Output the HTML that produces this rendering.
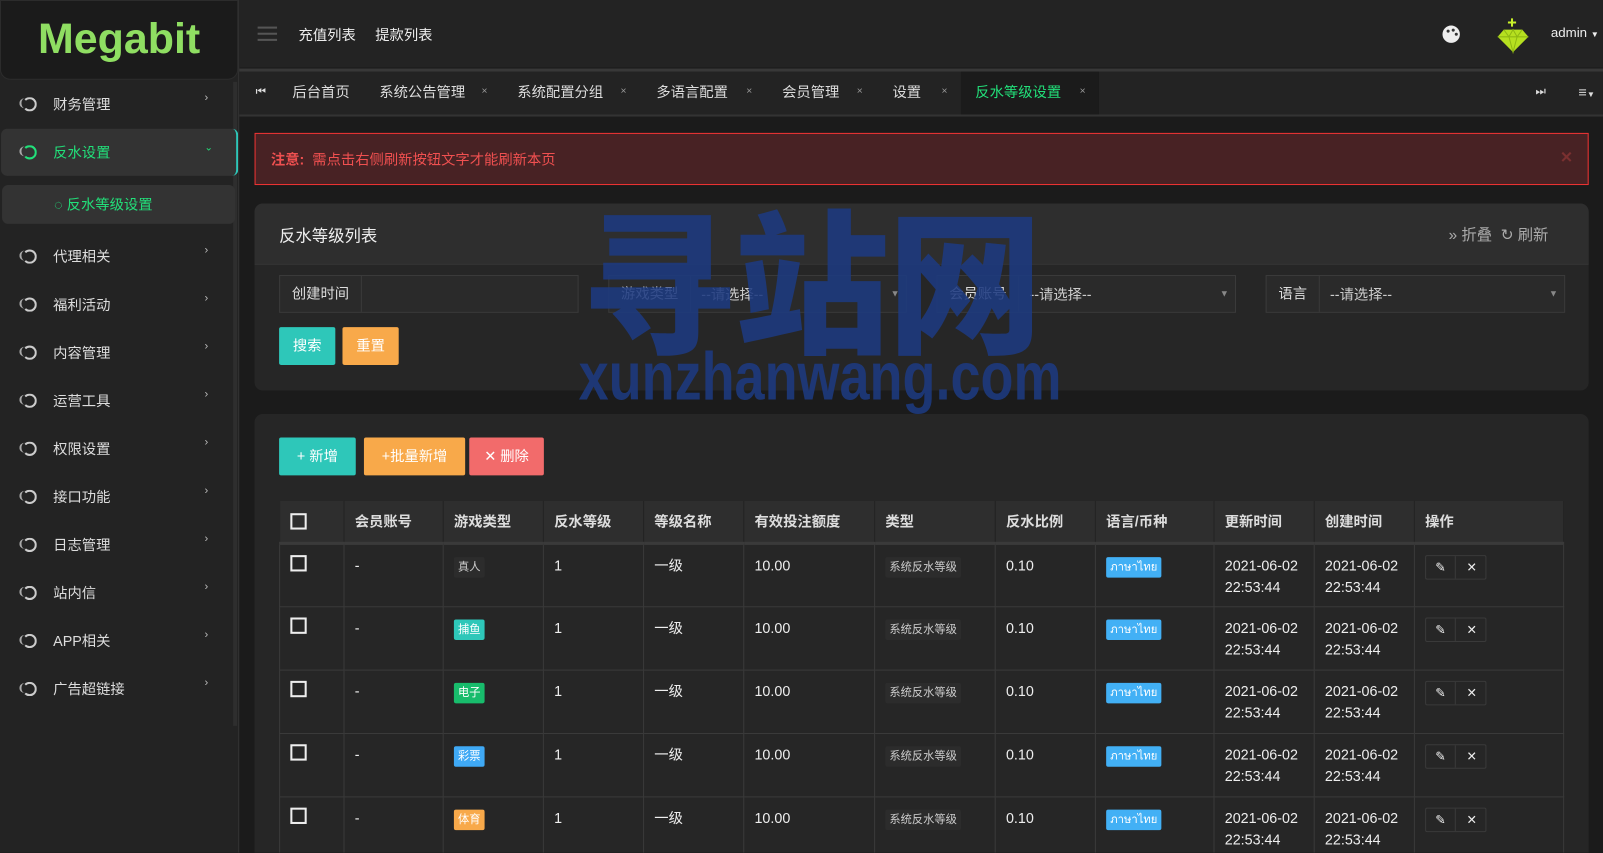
<!DOCTYPE html>
<html><head><meta charset="utf-8"><style>
*{box-sizing:border-box;margin:0;padding:0}
html,body{width:1603px;height:852px;overflow:hidden;background:#1b1b1b}
body{font-family:"Liberation Sans","Noto Sans CJK SC",sans-serif;color:#ddd;font-size:14px}
#w{position:absolute;left:0;top:0;width:1568px;height:834px;transform:scale(1.02232);transform-origin:0 0;background:#1b1b1b;overflow:hidden}
.a{position:absolute}
.side{left:0;top:0;width:234px;height:900px;background:#232323;border-right:1px solid #333}
.logo{left:0;top:0;width:233px;height:78px;background:#1b1b1b;border-radius:0 0 10px 10px;border:1px solid #2c2c2c;text-align:center;color:#8fde62;font-weight:bold;font-size:42px;line-height:74px;letter-spacing:0}
.mi{left:0;width:232px;height:46px;font-size:14px;color:#ddd}
.mi .ic{position:absolute;left:22px;top:50%;margin-top:-7px;width:14px;height:14px;border:2.5px solid #ccc;border-radius:50%;border-left-color:transparent}
.mi .ic:before{content:"";position:absolute;left:-5px;top:-1px;width:9px;height:10px;border-left:2px solid #aaa;border-radius:50%}
.mi .t{position:absolute;left:52px;top:50%;margin-top:-10px;line-height:20px}
.mi .ar{position:absolute;left:200px;top:50%;margin-top:-12px;font-size:11px;color:#bbb}
.hdr{left:234px;top:0;width:1334px;height:66px;background:#232323}
.tabs{left:234px;top:67px;width:1334px;height:47px;background:#232323;border-top:3px solid #383838;border-bottom:2px solid #333}
.tab{position:absolute;top:0;height:42px;line-height:40px;font-size:14px;color:#ddd}
.x{font-size:10px;color:#999;position:absolute;top:0}
.panel{background:#262626;border-radius:8px}
.fb{position:absolute;top:269px;height:37px;border:1px solid #3a3a3a;background:#2a2a2a}
.fb .l{position:absolute;left:0;top:0;width:80px;height:35px;border-right:1px solid #3a3a3a;line-height:35px;text-align:center;font-size:14px;color:#ddd}
.fb .v{position:absolute;left:90px;top:0;line-height:37px;font-size:14px;color:#ccc}
.fb .c{position:absolute;right:6px;top:0;line-height:35px;font-size:9px;color:#888}
.btn{position:absolute;height:37px;line-height:37px;text-align:center;color:#fff;font-size:14px;border-radius:2px}
table{position:absolute;left:273px;top:490px;width:1257px;border-collapse:collapse;font-size:14px}
th{background:#2e2e2e;height:41px;text-align:left;padding-left:10px;font-weight:bold;color:#ddd;border-right:1px solid #232323;border-bottom:3px solid #3a3a3a}
td{height:62px;vertical-align:top;padding:10px 0 0 10px;border:1px solid #3a3a3a;line-height:21px;color:#eee}
.cb{display:inline-block;width:16px;height:16px;border:2px solid #eee}
.tg{display:inline-block;font-size:11px;padding:0 4px;line-height:20px;border-radius:2px;color:#fff}
.tt{background:#2c2c2c;color:#ccc}
.op{display:inline-block;width:60px;height:24px;border:1px solid #3a3a3a;border-radius:2px;position:relative}
.op span{position:absolute;top:0;width:29px;line-height:22px;text-align:center;font-size:12px}
.wm{color:#1d3a80;opacity:.88}
</style></head><body><div id="w">
<div class="a side"></div>
<div class="a logo">Megabit</div>
<div class="a" style="left:228px;top:80px;width:4px;height:630px;background:#2e2e2e"></div>
<div class="a mi" style="top:79px"><i class="ic"></i><span class="t">财务管理</span><span class="ar">›</span></div>
<div class="a" style="left:1px;top:126px;width:232px;height:46px;background:#333;border-radius:6px;border-right:2px solid #2ec7b9"></div>
<div class="a mi" style="top:126px;color:#22e07a"><i class="ic" style="border-color:#22e07a;border-left-color:transparent"></i><span class="t">反水设置</span><span class="ar" style="color:#22e07a;font-size:10px;margin-top:-10px">⌄</span></div>
<div class="a" style="left:2px;top:181px;width:228px;height:38px;background:#333;border-radius:6px"></div>
<div class="a" style="left:53px;top:190px;font-size:14px;color:#22e07a;line-height:20px">◌ 反水等级设置</div>
<div class="a mi" style="top:228px"><i class="ic"></i><span class="t">代理相关</span><span class="ar">›</span></div>
<div class="a mi" style="top:275px"><i class="ic"></i><span class="t">福利活动</span><span class="ar">›</span></div>
<div class="a mi" style="top:322px"><i class="ic"></i><span class="t">内容管理</span><span class="ar">›</span></div>
<div class="a mi" style="top:369px"><i class="ic"></i><span class="t">运营工具</span><span class="ar">›</span></div>
<div class="a mi" style="top:416px"><i class="ic"></i><span class="t">权限设置</span><span class="ar">›</span></div>
<div class="a mi" style="top:463px"><i class="ic"></i><span class="t">接口功能</span><span class="ar">›</span></div>
<div class="a mi" style="top:510px"><i class="ic"></i><span class="t">日志管理</span><span class="ar">›</span></div>
<div class="a mi" style="top:557px"><i class="ic"></i><span class="t">站内信</span><span class="ar">›</span></div>
<div class="a mi" style="top:604px"><i class="ic"></i><span class="t">APP相关</span><span class="ar">›</span></div>
<div class="a mi" style="top:651px"><i class="ic"></i><span class="t">广告超链接</span><span class="ar">›</span></div>

<div class="a hdr"></div>
<div class="a" style="left:252px;top:26px;width:19px;height:2px;background:#555;box-shadow:0 6px 0 #555,0 12px 0 #555"></div>
<div class="a" style="left:292px;top:24px;font-size:14px;color:#eee">充值列表</div>
<div class="a" style="left:367px;top:24px;font-size:14px;color:#eee">提款列表</div>
<div class="a" style="left:1411px;top:25px;width:17px;height:17px;border-radius:50%;background:#eee"></div>
<div class="a" style="left:1415px;top:29px;width:3px;height:3px;border-radius:50%;background:#333;box-shadow:5px -1px 0 #333,8px 3px 0 #333"></div>
<svg class="a" style="left:1460px;top:14px" width="40" height="40" viewBox="0 0 40 40"><path d="M19 4v8M15 8h8" stroke="#c8f02a" stroke-width="2"/><path d="M5 22l6-7h18l6 7-15 15z" fill="#b6e020"/><path d="M5 22h30M11 15l5 7 4-7 4 7 5-7M16 22l4 15 4-15" stroke="#8fb812" stroke-width="1" fill="none"/></svg>
<div class="a" style="left:1517px;top:24px;font-size:13px;color:#eee">admin <span style="font-size:8px">▼</span></div>

<div class="a tabs">
<div class="tab" style="left:16px;font-size:11px">⏮</div>
<div class="tab" style="left:52px">后台首页</div>
<div class="tab" style="left:137px">系统公告管理</div><div class="x" style="left:237px;line-height:40px">×</div>
<div class="tab" style="left:272px">系统配置分组</div><div class="x" style="left:373px;line-height:40px">×</div>
<div class="tab" style="left:408px">多语言配置</div><div class="x" style="left:496px;line-height:40px">×</div>
<div class="tab" style="left:531px">会员管理</div><div class="x" style="left:604px;line-height:40px">×</div>
<div class="tab" style="left:639px">设置</div><div class="x" style="left:687px;line-height:40px">×</div>
<div class="tab" style="left:706px;width:135px;background:#1b1b1b"></div>
<div class="tab" style="left:720px;color:#22e07a">反水等级设置</div><div class="x" style="left:822px;line-height:40px">×</div>
<div class="tab" style="left:1268px;font-size:11px">⏭</div>
<div class="tab" style="left:1310px">≡<span style="font-size:8px">▼</span></div>
</div>

<div class="a" style="left:249px;top:130px;width:1305px;height:51px;background:#482224;border:1px solid #e33"></div>
<div class="a" style="left:265px;top:146px;font-size:14px;color:#f05050"><b>注意:</b>&nbsp; 需点击右侧刷新按钮文字才能刷新本页</div>
<div class="a" style="left:1526px;top:145px;font-size:15px;color:#7a3030;font-weight:bold">✕</div>

<div class="a panel" style="left:249px;top:199px;width:1305px;height:183px"></div>
<div class="a" style="left:249px;top:199px;width:1305px;height:60px;background:#2e2e2e;border-radius:8px 8px 0 0;border-bottom:1px solid #3a3a3a"></div>
<div class="a" style="left:273px;top:217px;font-size:16px;color:#eee">反水等级列表</div>
<div class="a" style="left:1417px;top:219px;font-size:15px;color:#aaa">» 折叠 &nbsp;↻ 刷新</div>
<div class="fb" style="left:273px;width:293px"><div class="l">创建时间</div></div>
<div class="fb" style="left:595px;width:292px"><div class="l">游戏类型</div><div class="v">--请选择--</div><div class="c">▼</div></div>
<div class="fb" style="left:916px;width:293px"><div class="l">会员账号</div><div class="v">--请选择--</div><div class="c">▼</div></div>
<div class="fb" style="left:1238px;width:293px"><div class="l" style="width:52px">语言</div><div class="v" style="left:62px">--请选择--</div><div class="c">▼</div></div>
<div class="btn" style="left:273px;top:320px;width:55px;background:#2ec7b9">搜索</div>
<div class="btn" style="left:335px;top:320px;width:55px;background:#f8a94a">重置</div>

<div class="a panel" style="left:249px;top:405px;width:1305px;height:440px"></div>
<div class="btn" style="left:273px;top:428px;width:75px;background:#2ec7b9">+ 新增</div>
<div class="btn" style="left:356px;top:428px;width:99px;background:#f8a94a">+批量新增</div>
<div class="btn" style="left:459px;top:428px;width:73px;background:#f26b6b">✕ 删除</div>

<table>
<tr><th style="width:63px"><span class="cb" style="vertical-align:middle"></span></th><th style="width:97px">会员账号</th><th style="width:98px">游戏类型</th><th style="width:98px">反水等级</th><th style="width:98px">等级名称</th><th style="width:128px">有效投注额度</th><th style="width:118px">类型</th><th style="width:98px">反水比例</th><th style="width:116px">语言/币种</th><th style="width:98px">更新时间</th><th style="width:98px">创建时间</th><th>操作</th></tr>
<tr><td><span class="cb"></span></td><td>-</td><td><span class="tg tt">真人</span></td><td>1</td><td>一级</td><td>10.00</td><td><span class="tg tt">系统反水等级</span></td><td>0.10</td><td><span class="tg" style="background:#42b0f5">ภาษาไทย</span></td><td>2021-06-02<br>22:53:44</td><td>2021-06-02<br>22:53:44</td><td><span class="op"><span style="left:0;border-right:1px solid #3a3a3a">✎</span><span style="left:30px">✕</span></span></td></tr>
<tr><td><span class="cb"></span></td><td>-</td><td><span class="tg" style="background:#2ec7b9">捕鱼</span></td><td>1</td><td>一级</td><td>10.00</td><td><span class="tg tt">系统反水等级</span></td><td>0.10</td><td><span class="tg" style="background:#42b0f5">ภาษาไทย</span></td><td>2021-06-02<br>22:53:44</td><td>2021-06-02<br>22:53:44</td><td><span class="op"><span style="left:0;border-right:1px solid #3a3a3a">✎</span><span style="left:30px">✕</span></span></td></tr>
<tr><td><span class="cb"></span></td><td>-</td><td><span class="tg" style="background:#18bc6c">电子</span></td><td>1</td><td>一级</td><td>10.00</td><td><span class="tg tt">系统反水等级</span></td><td>0.10</td><td><span class="tg" style="background:#42b0f5">ภาษาไทย</span></td><td>2021-06-02<br>22:53:44</td><td>2021-06-02<br>22:53:44</td><td><span class="op"><span style="left:0;border-right:1px solid #3a3a3a">✎</span><span style="left:30px">✕</span></span></td></tr>
<tr><td><span class="cb"></span></td><td>-</td><td><span class="tg" style="background:#3fa9f5">彩票</span></td><td>1</td><td>一级</td><td>10.00</td><td><span class="tg tt">系统反水等级</span></td><td>0.10</td><td><span class="tg" style="background:#42b0f5">ภาษาไทย</span></td><td>2021-06-02<br>22:53:44</td><td>2021-06-02<br>22:53:44</td><td><span class="op"><span style="left:0;border-right:1px solid #3a3a3a">✎</span><span style="left:30px">✕</span></span></td></tr>
<tr><td><span class="cb"></span></td><td>-</td><td><span class="tg" style="background:#f8a94a">体育</span></td><td>1</td><td>一级</td><td>10.00</td><td><span class="tg tt">系统反水等级</span></td><td>0.10</td><td><span class="tg" style="background:#42b0f5">ภาษาไทย</span></td><td>2021-06-02<br>22:53:44</td><td>2021-06-02<br>22:53:44</td><td><span class="op"><span style="left:0;border-right:1px solid #3a3a3a">✎</span><span style="left:30px">✕</span></span></td></tr>
</table>

<div class="a wm" style="left:568px;top:178px;font-size:152px;font-weight:900;font-family:'Noto Sans CJK SC',sans-serif;line-height:180px;letter-spacing:-2px">寻站网</div>
<div class="a wm" style="left:566px;top:330px;font-size:66px;font-weight:bold;font-family:'Liberation Sans Narrow','Liberation Sans',sans-serif;line-height:76px;transform:scaleX(0.8);transform-origin:0 0">xunzhanwang.com</div>
</div></body></html>
